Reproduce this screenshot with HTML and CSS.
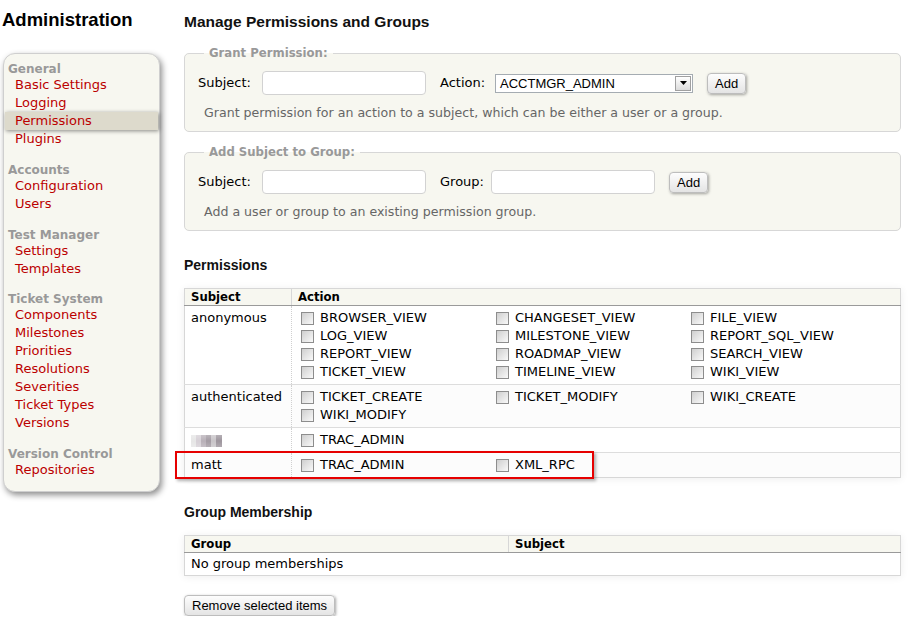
FILE: index.html
```html
<!DOCTYPE html>
<html lang="en">
<head>
<meta charset="utf-8">
<title>Administration</title>
<link rel="stylesheet" href="styles.css">
</head>
<body>
<div class="page">
  <aside class="side">
    <h1 class="side-title">Administration</h1>
    <nav class="tabs">
      <div class="group">
        <div class="group-title">General</div>
        <ul>
          <li><a href="#">Basic Settings</a></li>
          <li><a href="#">Logging</a></li>
          <li class="active"><a href="#">Permissions</a></li>
          <li><a href="#">Plugins</a></li>
        </ul>
      </div>
      <div class="group">
        <div class="group-title">Accounts</div>
        <ul>
          <li><a href="#">Configuration</a></li>
          <li><a href="#">Users</a></li>
        </ul>
      </div>
      <div class="group">
        <div class="group-title">Test Manager</div>
        <ul>
          <li><a href="#">Settings</a></li>
          <li><a href="#">Templates</a></li>
        </ul>
      </div>
      <div class="group">
        <div class="group-title">Ticket System</div>
        <ul>
          <li><a href="#">Components</a></li>
          <li><a href="#">Milestones</a></li>
          <li><a href="#">Priorities</a></li>
          <li><a href="#">Resolutions</a></li>
          <li><a href="#">Severities</a></li>
          <li><a href="#">Ticket Types</a></li>
          <li><a href="#">Versions</a></li>
        </ul>
      </div>
      <div class="group">
        <div class="group-title">Version Control</div>
        <ul>
          <li><a href="#">Repositories</a></li>
        </ul>
      </div>
    </nav>
  </aside>

  <main class="content">
    <h2 class="page-title">Manage Permissions and Groups</h2>

    <fieldset class="box">
      <legend>Grant Permission:</legend>
      <div class="row">
        <label class="lbl lbl-subject">Subject:</label>
        <input class="text" type="text">
        <label class="lbl lbl-action">Action:</label>
        <div class="select">
          <span class="select-value">ACCTMGR_ADMIN</span>
          <span class="select-btn"><svg width="7" height="4" viewBox="0 0 7 4"><path d="M0 0h7L3.5 4z" fill="#000"/></svg></span>
        </div>
        <button class="btn" type="button">Add</button>
      </div>
      <p class="hint">Grant permission for an action to a subject, which can be either a user or a group.</p>
    </fieldset>

    <fieldset class="box">
      <legend>Add Subject to Group:</legend>
      <div class="row">
        <label class="lbl lbl-subject">Subject:</label>
        <input class="text" type="text">
        <label class="lbl lbl-group">Group:</label>
        <input class="text" type="text">
        <button class="btn" type="button">Add</button>
      </div>
      <p class="hint">Add a user or group to an existing permission group.</p>
    </fieldset>

    <h3 class="section">Permissions</h3>
    <div class="table-wrap">
      <table class="listing">
        <thead>
          <tr><th class="col-subject">Subject</th><th class="col-action">Action</th></tr>
        </thead>
        <tbody>
          <tr class="odd">
            <td class="subj">anonymous</td>
            <td class="acts"><div class="act-grid">
              <label class="act"><input class="cb" type="checkbox"><span>BROWSER_VIEW</span></label>
              <label class="act"><input class="cb" type="checkbox"><span>CHANGESET_VIEW</span></label>
              <label class="act"><input class="cb" type="checkbox"><span>FILE_VIEW</span></label>
              <label class="act"><input class="cb" type="checkbox"><span>LOG_VIEW</span></label>
              <label class="act"><input class="cb" type="checkbox"><span>MILESTONE_VIEW</span></label>
              <label class="act"><input class="cb" type="checkbox"><span>REPORT_SQL_VIEW</span></label>
              <label class="act"><input class="cb" type="checkbox"><span>REPORT_VIEW</span></label>
              <label class="act"><input class="cb" type="checkbox"><span>ROADMAP_VIEW</span></label>
              <label class="act"><input class="cb" type="checkbox"><span>SEARCH_VIEW</span></label>
              <label class="act"><input class="cb" type="checkbox"><span>TICKET_VIEW</span></label>
              <label class="act"><input class="cb" type="checkbox"><span>TIMELINE_VIEW</span></label>
              <label class="act"><input class="cb" type="checkbox"><span>WIKI_VIEW</span></label>
            </div></td>
          </tr>
          <tr class="even">
            <td class="subj">authenticated</td>
            <td class="acts"><div class="act-grid">
              <label class="act"><input class="cb" type="checkbox"><span>TICKET_CREATE</span></label>
              <label class="act"><input class="cb" type="checkbox"><span>TICKET_MODIFY</span></label>
              <label class="act"><input class="cb" type="checkbox"><span>WIKI_CREATE</span></label>
              <label class="act"><input class="cb" type="checkbox"><span>WIKI_MODIFY</span></label>
            </div></td>
          </tr>
          <tr class="odd">
            <td class="subj"><span class="blurred" aria-label="hidden user"></span></td>
            <td class="acts"><div class="act-grid">
              <label class="act"><input class="cb" type="checkbox"><span>TRAC_ADMIN</span></label>
            </div></td>
          </tr>
          <tr class="even">
            <td class="subj">matt</td>
            <td class="acts"><div class="act-grid">
              <label class="act"><input class="cb" type="checkbox"><span>TRAC_ADMIN</span></label>
              <label class="act"><input class="cb" type="checkbox"><span>XML_RPC</span></label>
            </div></td>
          </tr>
        </tbody>
      </table>
      <div class="highlight"></div>
    </div>

    <h3 class="section">Group Membership</h3>
    <table class="listing groups">
      <thead>
        <tr><th class="col-group">Group</th><th>Subject</th></tr>
      </thead>
      <tbody>
        <tr class="odd"><td colspan="2" class="empty">No group memberships</td></tr>
      </tbody>
    </table>

    <button class="btn btn-remove" type="button">Remove selected items</button>
  </main>
</div>
</body>
</html>
```

FILE: styles.css
```css
* { box-sizing: border-box; }

html, body {
  margin: 0;
  padding: 0;
  background: #fff;
}

body {
  font-family: "DejaVu Sans", Verdana, sans-serif;
  font-size: 13px;
  line-height: 18px;
  color: #000;
}

.page {
  display: flex;
  align-items: flex-start;
  padding: 0 8px 0 3px;
}

/* ---------- sidebar ---------- */
.side {
  width: 157px;
  flex: none;
}

.side-title {
  margin: 0 0 0 -1px;
  padding-top: 8px;
  font-family: "Liberation Sans", Arial, sans-serif;
  font-weight: bold;
  font-size: 18.5px;
  line-height: 24px;
  color: #000;
}

.tabs {
  margin-top: 21px;
  background: #f7f7f0;
  border: 1px solid #cfcfcf;
  border-radius: 12px;
  box-shadow: 2px 3px 6px rgba(0, 0, 0, 0.45);
  padding: 8px 0 12px;
}

.group + .group { margin-top: 14.75px; }

.group-title {
  font-weight: bold;
  font-size: 12px;
  line-height: 14px;
  color: #999;
  padding-left: 4px;
}

.group ul {
  list-style: none;
  margin: 0;
  padding: 0;
}

.group li {
  line-height: 18px;
  margin: 0 1px;
  padding-left: 10px;
}

.group li.active {
  background: #dddacc;
  box-shadow: 1px 1px 4px rgba(0, 0, 0, 0.45);
}

.group a {
  color: #b00;
  text-decoration: none;
}

/* ---------- main ---------- */
.content {
  flex: 1;
  min-width: 0;
  margin-left: 24px;
}

.page-title {
  margin: 0;
  padding-top: 12px;
  font-family: "Liberation Sans", Arial, sans-serif;
  font-weight: bold;
  font-size: 15.5px;
  line-height: 20px;
  color: #111;
}

.box {
  margin: 14px 0 0;
  padding: 11px 13px 9px;
  border: 1px solid #d7d7d7;
  border-radius: 5px;
  background: #f7f7f0;
  min-width: 0;
}

.box + .box { margin-top: 13px; }

.box legend {
  margin-left: 6px;
  padding: 0 5px;
  font-weight: bold;
  font-size: 11.7px;
  line-height: 14px;
  color: #999;
}

.row {
  display: flex;
  align-items: center;
  height: 24px;
}

.lbl { flex: none; color: #000; }
.lbl-subject { width: 64px; }
.lbl-action { width: 55px; margin-left: 14px; }
.lbl-group { width: 51px; margin-left: 14px; }

.text {
  flex: none;
  width: 164px;
  height: 24px;
  margin: 0;
  padding: 2px 4px;
  border: 1px solid #d2d2d2;
  border-radius: 4px;
  background: #fff;
  font: 13px "DejaVu Sans", Verdana, sans-serif;
}

.select {
  flex: none;
  display: flex;
  align-items: center;
  width: 198px;
  height: 19px;
  border: 1px solid #a5acb2;
  background: #fff;
  font-family: "Liberation Sans", Arial, sans-serif;
  font-size: 13px;
}

.select-value {
  flex: 1;
  padding-left: 4px;
  line-height: 17px;
}

.select-btn {
  flex: none;
  display: flex;
  align-items: center;
  justify-content: center;
  width: 16px;
  height: 15px;
  margin-right: 1px;
  border: 1px solid #a0a0a0;
  background: linear-gradient(#ffffff, #dcdcdc);
}

.btn {
  flex: none;
  margin: 0 0 0 14px;
  height: 21px;
  padding: 0 7px;
  font-family: "Liberation Sans", Arial, sans-serif;
  font-size: 13px;
  color: #000;
  border: 1px solid #bdbdbd;
  border-radius: 4px;
  background: linear-gradient(#fdfdfd, #e4e4e4);
  box-shadow: 1px 1px 3px rgba(0, 0, 0, 0.35);
}

.hint {
  margin: 9px 0 0 6px;
  font-size: 12.6px;
  line-height: 18px;
  color: #666;
}

.section {
  margin: 25px 0 14px;
  font-family: "Liberation Sans", Arial, sans-serif;
  font-weight: bold;
  font-size: 14px;
  line-height: 18px;
  color: #111;
}

.table-wrap { position: relative; }

.listing {
  width: 100%;
  border-collapse: collapse;
  border: 1px solid #d7d7d7;
  box-shadow: 0 1px 8px rgba(0, 0, 0, 0.07);
}

.listing th {
  background: #f7f7f0;
  text-align: left;
  font-weight: bold;
  font-size: 11.7px;
  line-height: 16px;
  padding: 0 5px 0 6px;
  border-bottom: 1px solid #9a9a9a;
}

.listing th + th { border-left: 1px solid #d7d7d7; }

.col-subject { width: 107px; }
.col-group { width: 324px; }

.listing td {
  padding: 3px 6px;
  vertical-align: top;
  border-top: 1px solid #ddd;
}

.listing td + td { border-left: 1px dotted #d0d0d0; }

.listing tr.even td { background: #fcfcfc; }

.listing td.acts { padding-left: 9px; }

.act-grid {
  display: grid;
  grid-template-columns: repeat(3, 195px);
}

.act {
  display: flex;
  align-items: center;
  height: 18px;
  white-space: nowrap;
}

.cb {
  appearance: none;
  -webkit-appearance: none;
  flex: none;
  width: 13px;
  height: 13px;
  margin: 0 6px 0 0;
  border: 1px solid #8d8d8d;
  background: linear-gradient(135deg, #cfcfcf, #f9f9f9);
}

.blurred {
  display: inline-block;
  width: 31px;
  height: 12px;
  margin-top: 4px;
  vertical-align: top;
  background:
    linear-gradient(rgba(255,255,255,0.25), rgba(255,255,255,0) 50%, rgba(255,255,255,0.2)),
    linear-gradient(90deg, #e6e6e6 0 5px, #d6d0d6 5px 10px, #b8b0b8 10px 15px, #a39ba3 15px 20px, #c8c4c8 20px 25px, #9d959d 25px 31px);
}

.listing td.empty { padding: 2px 6px; }

.highlight {
  position: absolute;
  left: -9px;
  top: 163px;
  width: 419px;
  height: 28px;
  border: 2px solid #e60000;
  box-shadow: 2px 2px 3px rgba(0, 0, 0, 0.3);
  pointer-events: none;
}

.btn-remove {
  display: block;
  margin: 19px 0 0;
}
```
